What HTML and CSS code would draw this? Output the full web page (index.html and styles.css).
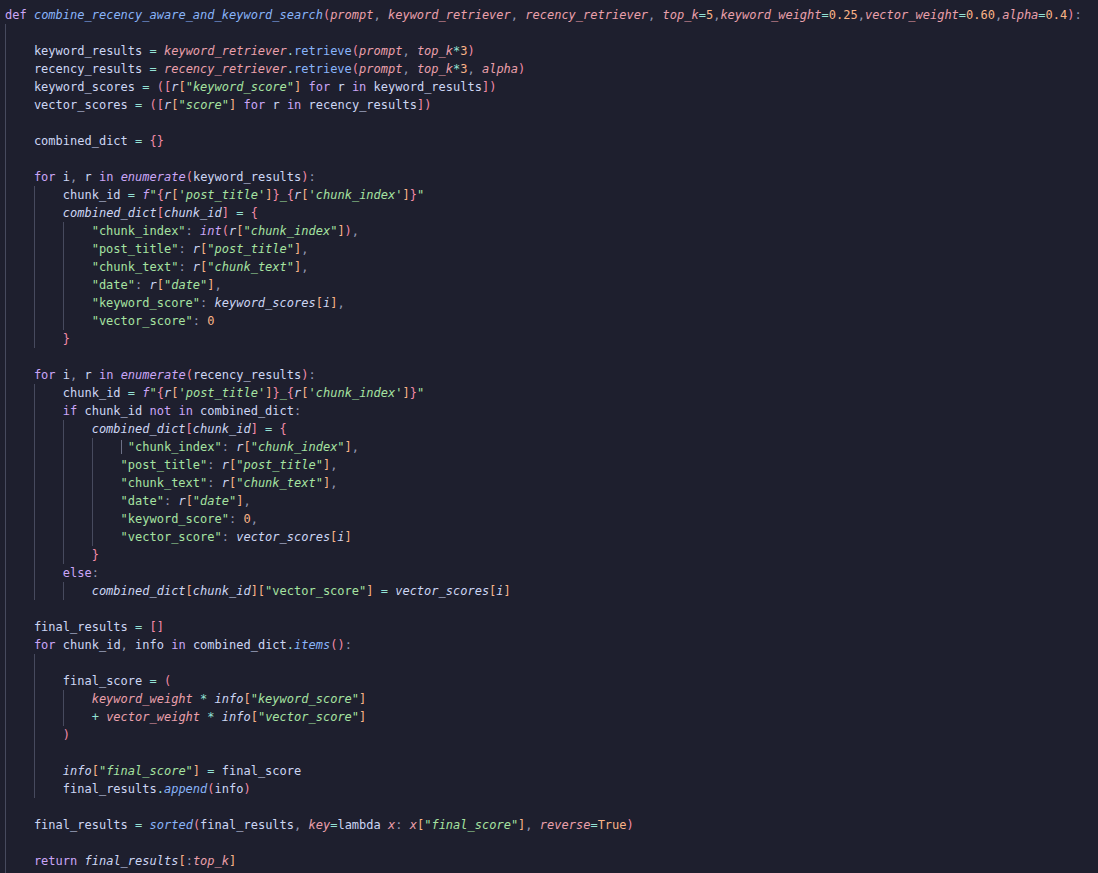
FILE: index.html
```html
<!DOCTYPE html>
<html>
<head>
<meta charset="utf-8">
<title>combine_recency_aware_and_keyword_search</title>
<link rel="stylesheet" href="styles.css">
</head>
<body>
<div class="editor">
<div class="ln"><span class="c"><span class="k">def</span> <span class="f">combine_recency_aware_and_keyword_search</span><span class="r">(</span><span class="p">prompt</span><span class="u">,</span> <span class="p">keyword_retriever</span><span class="u">,</span> <span class="p">recency_retriever</span><span class="u">,</span> <span class="p">top_k</span><span class="o">=</span><span class="n">5</span><span class="u">,</span><span class="p">keyword_weight</span><span class="o">=</span><span class="n">0.25</span><span class="u">,</span><span class="p">vector_weight</span><span class="o">=</span><span class="n">0.60</span><span class="u">,</span><span class="p">alpha</span><span class="o">=</span><span class="n">0.4</span><span class="r">)</span><span class="u">:</span></span></div>
<div class="ln"><span class="g"></span></div>
<div class="ln"><span class="g"></span><span class="c">keyword_results <span class="o">=</span> <span class="p">keyword_retriever</span><span class="o">.</span><span class="m">retrieve</span><span class="r">(</span><span class="p">prompt</span><span class="u">,</span> <span class="p">top_k</span><span class="o">*</span><span class="n">3</span><span class="r">)</span></span></div>
<div class="ln"><span class="g"></span><span class="c">recency_results <span class="o">=</span> <span class="p">recency_retriever</span><span class="o">.</span><span class="m">retrieve</span><span class="r">(</span><span class="p">prompt</span><span class="u">,</span> <span class="p">top_k</span><span class="o">*</span><span class="n">3</span><span class="u">,</span> <span class="p">alpha</span><span class="r">)</span></span></div>
<div class="ln"><span class="g"></span><span class="c">keyword_scores <span class="o">=</span> <span class="r">(</span><span class="r">[</span><span class="i">r</span><span class="q">[</span><span class="si">"keyword_score"</span><span class="q">]</span> <span class="k">for</span> r <span class="k">in</span> keyword_results<span class="r">]</span><span class="r">)</span></span></div>
<div class="ln"><span class="g"></span><span class="c">vector_scores <span class="o">=</span> <span class="r">(</span><span class="r">[</span><span class="i">r</span><span class="q">[</span><span class="si">"score"</span><span class="q">]</span> <span class="k">for</span> r <span class="k">in</span> recency_results<span class="r">]</span><span class="r">)</span></span></div>
<div class="ln"><span class="g"></span></div>
<div class="ln"><span class="g"></span><span class="c">combined_dict <span class="o">=</span> <span class="r">{}</span></span></div>
<div class="ln"><span class="g"></span></div>
<div class="ln"><span class="g"></span><span class="c"><span class="k">for</span> i<span class="u">,</span> r <span class="k">in</span> <span class="bi">enumerate</span><span class="r">(</span>keyword_results<span class="r">)</span><span class="u">:</span></span></div>
<div class="ln"><span class="g"></span><span class="g"></span><span class="c">chunk_id <span class="o">=</span> <span class="fp">f</span><span class="s">"</span><span class="r">{</span><span class="i">r</span><span class="q">[</span><span class="si">'post_title'</span><span class="q">]</span><span class="r">}</span><span class="s">_</span><span class="r">{</span><span class="i">r</span><span class="q">[</span><span class="si">'chunk_index'</span><span class="q">]</span><span class="r">}</span><span class="s">"</span></span></div>
<div class="ln"><span class="g"></span><span class="g"></span><span class="c"><span class="i">combined_dict</span><span class="r">[</span><span class="i">chunk_id</span><span class="r">]</span> <span class="o">=</span> <span class="r">{</span></span></div>
<div class="ln"><span class="g"></span><span class="g"></span><span class="g"></span><span class="c"><span class="s">"chunk_index"</span><span class="u">:</span> <span class="bi">int</span><span class="r">(</span><span class="i">r</span><span class="q">[</span><span class="si">"chunk_index"</span><span class="q">]</span><span class="r">)</span><span class="u">,</span></span></div>
<div class="ln"><span class="g"></span><span class="g"></span><span class="g"></span><span class="c"><span class="s">"post_title"</span><span class="u">:</span> <span class="i">r</span><span class="q">[</span><span class="si">"post_title"</span><span class="q">]</span><span class="u">,</span></span></div>
<div class="ln"><span class="g"></span><span class="g"></span><span class="g"></span><span class="c"><span class="s">"chunk_text"</span><span class="u">:</span> <span class="i">r</span><span class="q">[</span><span class="si">"chunk_text"</span><span class="q">]</span><span class="u">,</span></span></div>
<div class="ln"><span class="g"></span><span class="g"></span><span class="g"></span><span class="c"><span class="s">"date"</span><span class="u">:</span> <span class="i">r</span><span class="q">[</span><span class="si">"date"</span><span class="q">]</span><span class="u">,</span></span></div>
<div class="ln"><span class="g"></span><span class="g"></span><span class="g"></span><span class="c"><span class="s">"keyword_score"</span><span class="u">:</span> <span class="i">keyword_scores</span><span class="q">[</span><span class="i">i</span><span class="q">]</span><span class="u">,</span></span></div>
<div class="ln"><span class="g"></span><span class="g"></span><span class="g"></span><span class="c"><span class="s">"vector_score"</span><span class="u">:</span> <span class="n">0</span></span></div>
<div class="ln"><span class="g"></span><span class="g"></span><span class="c"><span class="r">}</span></span></div>
<div class="ln"><span class="g"></span></div>
<div class="ln"><span class="g"></span><span class="c"><span class="k">for</span> i<span class="u">,</span> r <span class="k">in</span> <span class="bi">enumerate</span><span class="r">(</span>recency_results<span class="r">)</span><span class="u">:</span></span></div>
<div class="ln"><span class="g"></span><span class="g"></span><span class="c">chunk_id <span class="o">=</span> <span class="fp">f</span><span class="s">"</span><span class="r">{</span><span class="i">r</span><span class="q">[</span><span class="si">'post_title'</span><span class="q">]</span><span class="r">}</span><span class="s">_</span><span class="r">{</span><span class="i">r</span><span class="q">[</span><span class="si">'chunk_index'</span><span class="q">]</span><span class="r">}</span><span class="s">"</span></span></div>
<div class="ln"><span class="g"></span><span class="g"></span><span class="c"><span class="k">if</span> chunk_id <span class="k">not</span> <span class="k">in</span> combined_dict<span class="u">:</span></span></div>
<div class="ln"><span class="g"></span><span class="g"></span><span class="g"></span><span class="c"><span class="i">combined_dict</span><span class="r">[</span><span class="i">chunk_id</span><span class="r">]</span> <span class="o">=</span> <span class="r">{</span></span></div>
<div class="ln"><span class="g"></span><span class="g"></span><span class="g"></span><span class="g"></span><span class="c"><span class="cur"> </span><span class="s">"chunk_index"</span><span class="u">:</span> <span class="i">r</span><span class="q">[</span><span class="si">"chunk_index"</span><span class="q">]</span><span class="u">,</span></span></div>
<div class="ln"><span class="g"></span><span class="g"></span><span class="g"></span><span class="g"></span><span class="c"><span class="s">"post_title"</span><span class="u">:</span> <span class="i">r</span><span class="q">[</span><span class="si">"post_title"</span><span class="q">]</span><span class="u">,</span></span></div>
<div class="ln"><span class="g"></span><span class="g"></span><span class="g"></span><span class="g"></span><span class="c"><span class="s">"chunk_text"</span><span class="u">:</span> <span class="i">r</span><span class="q">[</span><span class="si">"chunk_text"</span><span class="q">]</span><span class="u">,</span></span></div>
<div class="ln"><span class="g"></span><span class="g"></span><span class="g"></span><span class="g"></span><span class="c"><span class="s">"date"</span><span class="u">:</span> <span class="i">r</span><span class="q">[</span><span class="si">"date"</span><span class="q">]</span><span class="u">,</span></span></div>
<div class="ln"><span class="g"></span><span class="g"></span><span class="g"></span><span class="g"></span><span class="c"><span class="s">"keyword_score"</span><span class="u">:</span> <span class="n">0</span><span class="u">,</span></span></div>
<div class="ln"><span class="g"></span><span class="g"></span><span class="g"></span><span class="g"></span><span class="c"><span class="s">"vector_score"</span><span class="u">:</span> <span class="i">vector_scores</span><span class="q">[</span><span class="i">i</span><span class="q">]</span></span></div>
<div class="ln"><span class="g"></span><span class="g"></span><span class="g"></span><span class="c"><span class="r">}</span></span></div>
<div class="ln"><span class="g"></span><span class="g"></span><span class="c"><span class="k">else</span><span class="u">:</span></span></div>
<div class="ln"><span class="g"></span><span class="g"></span><span class="g"></span><span class="c"><span class="i">combined_dict</span><span class="q">[</span><span class="i">chunk_id</span><span class="q">]</span><span class="q">[</span><span class="s">"vector_score"</span><span class="q">]</span> <span class="o">=</span> <span class="i">vector_scores</span><span class="q">[</span><span class="i">i</span><span class="q">]</span></span></div>
<div class="ln"><span class="g"></span></div>
<div class="ln"><span class="g"></span><span class="c">final_results <span class="o">=</span> <span class="r">[]</span></span></div>
<div class="ln"><span class="g"></span><span class="c"><span class="k">for</span> chunk_id<span class="u">,</span> info <span class="k">in</span> combined_dict<span class="o">.</span><span class="mi">items</span><span class="r">()</span><span class="u">:</span></span></div>
<div class="ln"><span class="g"></span><span class="g"></span></div>
<div class="ln"><span class="g"></span><span class="g"></span><span class="c">final_score <span class="o">=</span> <span class="r">(</span></span></div>
<div class="ln"><span class="g"></span><span class="g"></span><span class="g"></span><span class="c"><span class="p">keyword_weight</span> <span class="o">*</span> <span class="i">info</span><span class="q">[</span><span class="si">"keyword_score"</span><span class="q">]</span></span></div>
<div class="ln"><span class="g"></span><span class="g"></span><span class="g"></span><span class="c"><span class="o">+</span> <span class="p">vector_weight</span> <span class="o">*</span> <span class="i">info</span><span class="q">[</span><span class="si">"vector_score"</span><span class="q">]</span></span></div>
<div class="ln"><span class="g"></span><span class="g"></span><span class="c"><span class="r">)</span></span></div>
<div class="ln"><span class="g"></span><span class="g"></span></div>
<div class="ln"><span class="g"></span><span class="g"></span><span class="c"><span class="i">info</span><span class="q">[</span><span class="si">"final_score"</span><span class="q">]</span> <span class="o">=</span> final_score</span></div>
<div class="ln"><span class="g"></span><span class="g"></span><span class="c">final_results<span class="o">.</span><span class="mi">append</span><span class="r">(</span>info<span class="r">)</span></span></div>
<div class="ln"><span class="g"></span></div>
<div class="ln"><span class="g"></span><span class="c">final_results <span class="o">=</span> <span class="mi">sorted</span><span class="r">(</span>final_results<span class="u">,</span> <span class="p">key</span><span class="o">=</span><span class="lam">lambda</span> <span class="p">x</span><span class="u">:</span> <span class="p">x</span><span class="q">[</span><span class="si">"final_score"</span><span class="q">]</span><span class="u">,</span> <span class="p">reverse</span><span class="o">=</span><span class="n">True</span><span class="r">)</span></span></div>
<div class="ln"><span class="g"></span></div>
<div class="ln"><span class="g"></span><span class="c"><span class="k">return</span> <span class="i">final_results</span><span class="q">[</span><span class="u">:</span><span class="p">top_k</span><span class="q">]</span></span></div>
<div class="ln"><span class="g"></span></div>
</div>
</body>
</html>
```

FILE: styles.css
```css
html, body {
  margin: 0;
  padding: 0;
  background: #1e1f2e;
  height: 100%;
  overflow: hidden;
}

.editor {
  padding: 6px 0 0 5px;
  font-family: "DejaVu Sans Mono", "Liberation Mono", monospace;
  font-size: 12px;
  line-height: 18px;
  color: #cdd6f4;
  display: flex;
  flex-direction: column;
}

.ln {
  display: flex;
  height: 18px;
  white-space: pre;
}

.g {
  display: block;
  flex: none;
  width: 4ch;
  height: 18px;
  box-shadow: inset 1px 0 0 #474a5e;
}

.c {
  display: block;
  white-space: pre;
}

.cur {
  box-shadow: inset 1px 0 0 #6c7086;
}

.k { color: #cba6f7; }
.lam { color: #cdd6f4; }
.f { color: #89b4fa; font-style: italic; }
.p { color: #eba0ac; font-style: italic; }
.o { color: #94e2d5; }
.n { color: #fab387; }
.s { color: #a6e3a1; }
.si { color: #a6e3a1; font-style: italic; }
.u { color: #9399b2; }
.r { color: #f38ba8; }
.q { color: #fab387; }
.i { font-style: italic; }
.m { color: #89b4fa; }
.mi { color: #89b4fa; font-style: italic; }
.bi { color: #cba6f7; font-style: italic; }
.fp { color: #cba6f7; font-style: italic; }
```
